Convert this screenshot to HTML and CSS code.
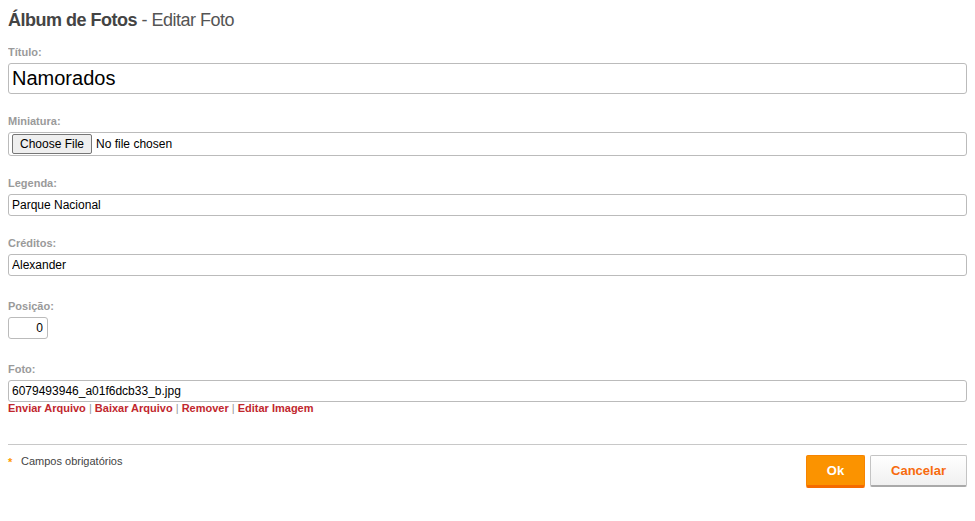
FILE: index.html
```html
<!DOCTYPE html>
<html lang="pt">
<head>
<meta charset="utf-8">
<title>Álbum de Fotos - Editar Foto</title>
<link rel="stylesheet" href="styles.css">
</head>
<body>
<div class="page">
  <h1 class="page-title"><strong>Álbum de Fotos</strong> - Editar Foto</h1>
  <form class="form">
    <div class="field field--title">
      <label class="field-label">Título:</label>
      <input class="input input--big" type="text" value="Namorados">
    </div>
    <div class="field">
      <label class="field-label">Miniatura:</label>
      <div class="file-box"><input class="file-input" type="file"></div>
    </div>
    <div class="field">
      <label class="field-label">Legenda:</label>
      <input class="input" type="text" value="Parque Nacional">
    </div>
    <div class="field field--wide">
      <label class="field-label">Créditos:</label>
      <input class="input" type="text" value="Alexander">
    </div>
    <div class="field field--wide">
      <label class="field-label">Posição:</label>
      <input class="input input--num" type="text" value="0">
    </div>
    <div class="field field--last">
      <label class="field-label">Foto:</label>
      <input class="input" type="text" value="6079493946_a01f6dcb33_b.jpg">
      <div class="file-links">
        <a href="#">Enviar Arquivo</a> | <a href="#">Baixar Arquivo</a> | <a href="#">Remover</a> | <a href="#">Editar Imagem</a>
      </div>
    </div>
    <div class="footer">
      <div class="required"><span class="required-mark">*</span>Campos obrigatórios</div>
      <div class="actions">
        <button type="button" class="btn btn--ok">Ok</button>
        <button type="button" class="btn btn--cancel">Cancelar</button>
      </div>
    </div>
  </form>
</div>
</body>
</html>
```
FILE: styles.css
```css
html, body {
  margin: 0;
  padding: 0;
  background: #fff;
}
body {
  margin: 8px;
  font-family: "Liberation Sans", Arial, sans-serif;
  color: #333;
}
.page-title {
  margin: 0 0 14px;
  font-size: 18px;
  line-height: 24px;
  font-weight: normal;
  color: #555;
  letter-spacing: -0.5px;
}
.page-title strong {
  color: #444;
  font-weight: bold;
}
.form {
  display: flex;
  flex-direction: column;
}
.field {
  display: flex;
  flex-direction: column;
  align-items: flex-start;
  margin-bottom: 21px;
}
.field--title { margin-bottom: 21px; }
.field--wide { margin-bottom: 24px; }
.field--last { margin-bottom: 0; }
.field-label {
  font-size: 11px;
  line-height: 13px;
  font-weight: bold;
  color: #9a9a9a;
  margin-bottom: 4px;
}
.input {
  box-sizing: border-box;
  width: 100%;
  height: 22px;
  margin: 0;
  padding: 0 3px;
  border: 1px solid #bbb;
  border-radius: 3px;
  font-family: "Liberation Sans", Arial, sans-serif;
  font-size: 12px;
  color: #000;
  background: #fff;
  outline: none;
}
.input--big {
  height: 31px;
  font-size: 20px;
}
.input--num {
  width: 40px;
  text-align: right;
  padding-right: 4px;
}
.file-box {
  box-sizing: border-box;
  width: 100%;
  height: 24px;
  border: 1px solid #bbb;
  border-radius: 3px;
  padding: 1px 3px;
  display: flex;
  align-items: center;
}
.file-input {
  font-family: "Liberation Sans", Arial, sans-serif;
  font-size: 12px;
  color: #000;
  margin: 0;
}
.file-input::file-selector-button {
  font-family: "Liberation Sans", Arial, sans-serif;
  font-size: 12px;
  color: #000;
  background: #efefef;
  border: 1px solid #767676;
  border-radius: 2px;
  padding: 2px 7px;
  margin-right: 4px;
  height: 20px;
}
.file-links {
  font-size: 11px;
  line-height: 13px;
  color: #999;
  margin-top: 0;
}
.file-links a {
  color: #c1272d;
  font-weight: bold;
  text-decoration: none;
}
.footer {
  margin-top: 29px;
  border-top: 1px solid #c8c8c8;
  padding-top: 10px;
  display: flex;
  justify-content: space-between;
  align-items: flex-start;
}
.required {
  font-size: 11px;
  line-height: 13px;
  color: #444;
  display: flex;
  align-items: flex-start;
}
.required-mark {
  color: #f90;
  font-weight: bold;
  font-size: 11px;
  line-height: 11px;
  width: 13px;
  margin-top: 2px;
}
.actions {
  display: flex;
  gap: 5px;
}
.btn {
  box-sizing: border-box;
  font-family: "Liberation Sans", Arial, sans-serif;
  font-size: 13px;
  font-weight: bold;
  border-radius: 2px;
  cursor: pointer;
  padding: 0;
}
.btn--ok {
  width: 59px;
  height: 33px;
  background: #fb9300;
  color: #fff;
  border: 1px solid #f78400;
  border-bottom: 3px solid #f56b00;
}
.btn--cancel {
  width: 97px;
  height: 32px;
  background: linear-gradient(#fff, #f0f0f0);
  color: #f76b0d;
  border: 1px solid #c4c4c4;
  border-bottom: 2px solid #a9a9a9;
}
```
